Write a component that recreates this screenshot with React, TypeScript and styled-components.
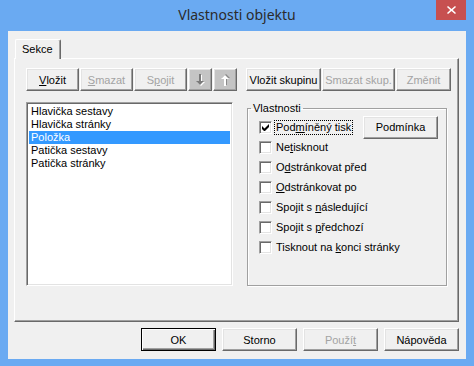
import React from 'react';
import styled, { createGlobalStyle, css } from 'styled-components';

const GlobalStyle = createGlobalStyle`
  html, body {
    margin: 0;
    padding: 0;
    background: #6aaaf2;
  }
  body {
    font-family: "Liberation Sans", Arial, sans-serif;
    font-size: 11px;
    color: #000;
  }
`;

const Window = styled.div`
  width: 474px;
  height: 366px;
  box-sizing: border-box;
  background: #6aaaf2;
  padding: 0 8px 7px;
  display: flex;
  flex-direction: column;
`;

const TitleBar = styled.div`
  height: 31px;
  flex: 0 0 auto;
  display: grid;
  grid-template-columns: 1fr auto 1fr;
  align-items: start;
`;

const Title = styled.div`
  grid-column: 2;
  font-family: "Noto Sans", "Open Sans", sans-serif;
  font-size: 14px;
  line-height: 30px;
  color: #2b2b2b;
`;

const CloseButton = styled.div`
  grid-column: 3;
  justify-self: end;
  width: 30px;
  height: 20px;
  background: #c75050;
  display: flex;
  align-items: center;
  justify-content: center;
`;

const Client = styled.div`
  flex: 1 1 auto;
  background: #f0f0f0;
  box-sizing: border-box;
  padding: 8px 7px 8px 6px;
  display: flex;
  flex-direction: column;
`;

const TabStrip = styled.div`
  height: 19px;
  display: flex;
  align-items: flex-end;
  padding-left: 1px;
  position: relative;
  z-index: 1;
`;

const Tab = styled.div`
  height: 20px;
  margin-bottom: -1px;
  box-sizing: border-box;
  padding: 3px 7px 0 6px;
  background: #f0f0f0;
  border-top: 1px solid #fff;
  border-left: 1px solid #fff;
  border-right: 1px solid #696969;
  border-radius: 2px 2px 0 0;
  box-shadow: inset -1px 0 #a0a0a0;
`;

const Panel = styled.div`
  flex: 1 1 auto;
  box-sizing: border-box;
  border: 1px solid;
  border-color: #fff #696969 #696969 #fff;
  box-shadow: inset -1px -1px #a0a0a0;
  padding: 9px 0 0 11px;
  display: grid;
  grid-template-columns: 211px 205px;
  grid-template-rows: 23px 184px;
  column-gap: 9px;
  row-gap: 11px;
  align-content: start;
`;

const ButtonRow = styled.div`
  display: flex;
  gap: 1px;
`;

const Btn = styled.button<{ $w: number; $def?: boolean }>`
  width: ${(p) => p.$w}px;
  height: 23px;
  flex: 0 0 auto;
  margin: 0;
  padding: 0;
  box-sizing: border-box;
  font: 11px "Liberation Sans", Arial, sans-serif;
  color: #000;
  background: #f0f0f0;
  border: 1px solid;
  border-color: #fff #696969 #696969 #fff;
  box-shadow: inset -1px -1px #a0a0a0, inset 1px 1px #e3e3e3;
  display: flex;
  align-items: center;
  justify-content: center;
  &:disabled {
    color: #a3a3a3;
  }
  ${(p) =>
    p.$def &&
    css`
      border-color: #000;
      box-shadow: inset 1px 1px #fff, inset -1px -1px #696969, inset -2px -2px #a0a0a0;
    `}
`;

const ArrowBtn = styled(Btn)`
  background: #c4c4c4;
`;

const ListBox = styled.div`
  width: 207px;
  height: 184px;
  box-sizing: border-box;
  background: #fff;
  border: 1px solid;
  border-color: #a0a0a0 #fff #fff #a0a0a0;
  box-shadow: inset 1px 1px #696969, inset -1px -1px #e3e3e3;
  padding: 2px;
`;

const ListItem = styled.div<{ $selected?: boolean }>`
  height: 13px;
  line-height: 13px;
  padding-left: 2px;
  white-space: nowrap;
  background: ${(p) => (p.$selected ? '#3399ff' : 'transparent')};
  color: ${(p) => (p.$selected ? '#fff' : '#000')};
`;

const GroupBox = styled.fieldset`
  margin: 0 4px 0 1px;
  padding: 2px 8px 0 11px;
  min-width: 0;
  border: 1px solid #a0a0a0;
  box-shadow: inset 1px 1px #fff, 1px 1px #fff;
  display: flex;
  flex-direction: column;
`;

const Legend = styled.legend`
  margin-left: -8px;
  padding: 0 2px;
  line-height: 13px;
`;

const CheckRow = styled.div`
  height: 20px;
  display: flex;
  align-items: center;
`;

const Box = styled.span`
  width: 13px;
  height: 13px;
  box-sizing: border-box;
  flex: 0 0 auto;
  background: #fff;
  border: 1px solid;
  border-color: #a0a0a0 #fff #fff #a0a0a0;
  box-shadow: inset 1px 1px #696969, inset -1px -1px #e3e3e3;
  display: flex;
  align-items: center;
  justify-content: center;
`;

const Label = styled.span<{ $focus?: boolean }>`
  margin-left: 3px;
  padding: 0 1px;
  line-height: 13px;
  white-space: nowrap;
  outline: ${(p) => (p.$focus ? '1px dotted #000' : 'none')};
`;

const Spacer = styled.div`
  flex: 1 1 auto;
`;

const Footer = styled.div`
  margin-top: 6px;
  display: flex;
  justify-content: flex-end;
  gap: 6px;
`;

function Check({ checked, focus, children }: { checked?: boolean; focus?: boolean; children: React.ReactNode }) {
  return (
    <>
      <Box>
        {checked && (
          <svg width="7" height="7" viewBox="0 0 7 7">
            <path d="M0 2v3l2 2h1l4-4V0L2.5 4.5z" fill="#000" />
          </svg>
        )}
      </Box>
      <Label $focus={focus}>{children}</Label>
    </>
  );
}

function Arrow({ up, color, shadow }: { up?: boolean; color: string; shadow: string }) {
  const d = 'M4 0h2v7h3l-4 4-4-4h3z';
  return (
    <svg width="11" height="12" viewBox="0 0 11 12" style={up ? { transform: 'scaleY(-1)' } : undefined}>
      <path d={d} fill={shadow} transform="translate(1 1)" />
      <path d={d} fill={color} />
    </svg>
  );
}

export default function App() {
  return (
    <>
      <GlobalStyle />
      <Window>
        <TitleBar>
          <Title>Vlastnosti objektu</Title>
          <CloseButton>
            <svg width="9" height="8" viewBox="0 0 9 8">
              <path d="M1 0l3.5 3 3.5-3 1 1-3.2 3L9 7l-1 1-3.5-3L1 8 0 7l3.2-3L0 1z" fill="#fff" />
            </svg>
          </CloseButton>
        </TitleBar>
        <Client>
          <TabStrip>
            <Tab>Sekce</Tab>
          </TabStrip>
          <Panel>
            <ButtonRow>
              <Btn $w={53}>
                <span><u>V</u>ložit</span>
              </Btn>
              <Btn $w={53} disabled>
                <span><u>S</u>mazat</span>
              </Btn>
              <Btn $w={53} disabled>
                <span>S<u>p</u>ojit</span>
              </Btn>
              <ArrowBtn $w={24}>
                <Arrow color="#7a7a7a" shadow="#fff" />
              </ArrowBtn>
              <ArrowBtn $w={24}>
                <Arrow up color="#fff" shadow="#8a8a8a" />
              </ArrowBtn>
            </ButtonRow>
            <ButtonRow>
              <Btn $w={75}>Vložit skupinu</Btn>
              <Btn $w={73} disabled>
                Smazat skup.
              </Btn>
              <Btn $w={55} disabled>
                Změnit
              </Btn>
            </ButtonRow>
            <ListBox>
              <ListItem>Hlavička sestavy</ListItem>
              <ListItem>Hlavička stránky</ListItem>
              <ListItem $selected>Položka</ListItem>
              <ListItem>Patička sestavy</ListItem>
              <ListItem>Patička stránky</ListItem>
            </ListBox>
            <GroupBox>
              <Legend>Vlastnosti</Legend>
              <CheckRow>
                <Check checked focus>
                  Pod<u>m</u>íněný tisk
                </Check>
                <Spacer />
                <Btn $w={75}>Podmínka</Btn>
              </CheckRow>
              <CheckRow>
                <Check>
                  Ne<u>t</u>isknout
                </Check>
              </CheckRow>
              <CheckRow>
                <Check>
                  O<u>d</u>stránkovat před
                </Check>
              </CheckRow>
              <CheckRow>
                <Check>
                  <u>O</u>dstránkovat po
                </Check>
              </CheckRow>
              <CheckRow>
                <Check>
                  Spojit s <u>n</u>ásledující
                </Check>
              </CheckRow>
              <CheckRow>
                <Check>
                  Spojit s <u>p</u>ředchozí
                </Check>
              </CheckRow>
              <CheckRow>
                <Check>
                  Tisknout na <u>k</u>onci stránky
                </Check>
              </CheckRow>
            </GroupBox>
          </Panel>
          <Footer>
            <Btn $w={75} $def>
              OK
            </Btn>
            <Btn $w={75}>Storno</Btn>
            <Btn $w={75} disabled>
              <span>Použí<u>t</u></span>
            </Btn>
            <Btn $w={75}>Nápověda</Btn>
          </Footer>
        </Client>
      </Window>
    </>
  );
}
